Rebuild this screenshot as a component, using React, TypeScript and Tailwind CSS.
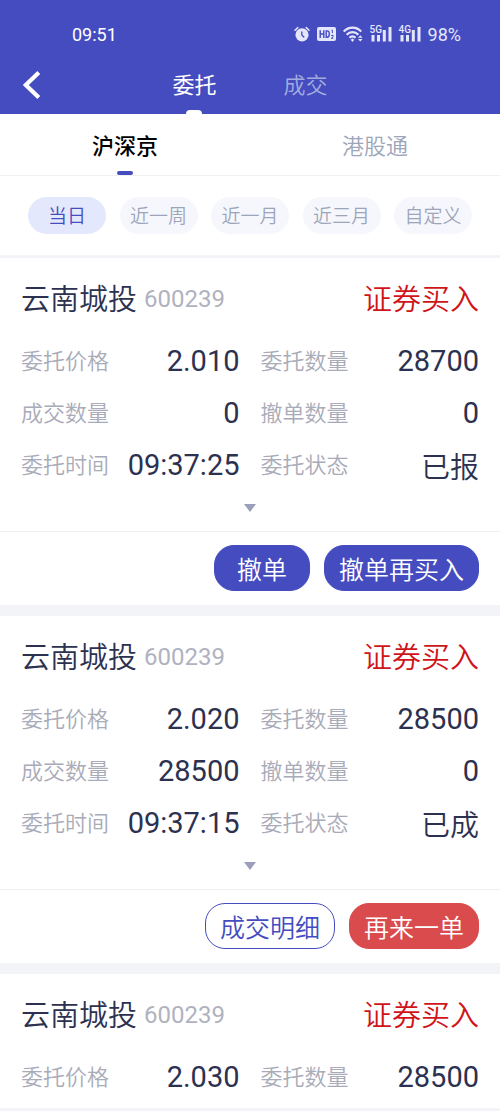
import { useState } from 'react'
import clsx from 'clsx'

type Action = { label: string; tone: 'primary' | 'outline' | 'danger' }

type Order = {
  id: number
  name: string
  code: string
  side: string
  fields: { label: string; value: string }[]
  actions: Action[]
}

const orders: Order[] = [
  {
    id: 1,
    name: '云南城投',
    code: '600239',
    side: '证券买入',
    fields: [
      { label: '委托价格', value: '2.010' },
      { label: '委托数量', value: '28700' },
      { label: '成交数量', value: '0' },
      { label: '撤单数量', value: '0' },
      { label: '委托时间', value: '09:37:25' },
      { label: '委托状态', value: '已报' },
    ],
    actions: [
      { label: '撤单', tone: 'primary' },
      { label: '撤单再买入', tone: 'primary' },
    ],
  },
  {
    id: 2,
    name: '云南城投',
    code: '600239',
    side: '证券买入',
    fields: [
      { label: '委托价格', value: '2.020' },
      { label: '委托数量', value: '28500' },
      { label: '成交数量', value: '28500' },
      { label: '撤单数量', value: '0' },
      { label: '委托时间', value: '09:37:15' },
      { label: '委托状态', value: '已成' },
    ],
    actions: [
      { label: '成交明细', tone: 'outline' },
      { label: '再来一单', tone: 'danger' },
    ],
  },
  {
    id: 3,
    name: '云南城投',
    code: '600239',
    side: '证券买入',
    fields: [
      { label: '委托价格', value: '2.030' },
      { label: '委托数量', value: '28500' },
    ],
    actions: [],
  },
]

const ranges = ['当日', '近一周', '近一月', '近三月', '自定义']

function AlarmIcon() {
  return (
    <svg viewBox="0 0 16 16" className="h-4 w-4" fill="none" stroke="currentColor" strokeLinecap="round">
      <circle cx="8" cy="8.8" r="6.6" fill="currentColor" stroke="none" />
      <path d="M1 4.2 3.8 1.6M15 4.2 12.2 1.6" strokeWidth="1.5" />
      <path d="M7.8 5.8V9l2 2" stroke="#444cbf" strokeWidth="1.3" />
    </svg>
  )
}

function HdIcon() {
  return (
    <svg viewBox="0 0 19 14" className="h-[14px] w-[19px]">
      <rect width="19" height="14" rx="2" fill="currentColor" />
      <g fill="none" stroke="#444cbf" strokeWidth="1.4">
        <path d="M3.2 3.2v7.8M6.8 3.2v7.8M3.2 7h3.6" />
        <path d="M9.200 3.900v6.400h.8c1.600 0 2.300-1 2.300-3.200s-.7-3.200-2.300-3.200z" />
        <path d="M14.400 3.200h1v3M14.100 8.400h2v1.300l-1.800 1.600h2" strokeWidth="1" />
      </g>
    </svg>
  )
}

function WifiIcon() {
  return (
    <svg viewBox="0 0 20 16" className="h-4 w-5" fill="none" stroke="currentColor" strokeWidth="2.2">
      <path d="M.8 5.6C5.4.3 13.6.3 18.2 5.6" />
      <path d="M3.7 8.8c3.2-3.6 8.4-3.6 11.6 0" />
      <path d="M6.5 11.8c1.7-1.9 4.3-1.9 6 0" />
      <path d="m7.700 13.800 1.800-1.400 1.800 1.400-1.800 2.200z" fill="currentColor" stroke="none" />
      <path d="m15 11.800 2.300-2.600 2.300 2.600zM15 13l2.300 2.600 2.300-2.600z" fill="currentColor" stroke="none" />
    </svg>
  )
}

function Signal({ label }: { label: string }) {
  return (
    <span className="relative block">
      <svg viewBox="0 0 22 16" className="h-4 w-[22px]" fill="currentColor">
        <path d="M1.500 9h3v6.500h-3zM7 9h3v6.500H7zM12.800 4h3v11.500h-3zM18.500 1h3v14.500h-3z" />
      </svg>
      <span className="absolute -top-px left-0 bg-[#444cbf] text-[10px] leading-[10px] font-medium">{label}</span>
    </span>
  )
}

function StatusBar() {
  return (
    <div className="flex h-[58px] items-center justify-between pt-[10px] pr-[39px] pl-[72px] font-normal">
      <span className="text-[18px]">09:51</span>
      <div className="flex items-center gap-[7px] text-[#e4e7fb]">
        <AlarmIcon />
        <HdIcon />
        <WifiIcon />
        <Signal label="5G" />
        <Signal label="4G" />
        <span className="text-[18px]">98%</span>
      </div>
    </div>
  )
}

function ActionButton({ label, tone }: Action) {
  return (
    <button
      type="button"
      className={clsx(
        'h-[46px] rounded-[20px] border text-[25px] leading-[44px]',
        label.length > 2 ? 'px-[14px]' : 'px-[22px]',
        tone === 'primary' && 'border-[#444cbf] bg-[#444cbf] text-white',
        tone === 'outline' && 'border-[#444cbf] bg-white text-[#444cbf]',
        tone === 'danger' && 'border-[#d94b4d] bg-[#d94b4d] text-white',
      )}
    >
      {label}
    </button>
  )
}

function OrderCard({ order }: { order: Order }) {
  return (
    <article className="bg-white">
      <div className="px-[21px] pt-[18px]">
        <div className="flex h-11 items-center justify-between">
          <h2 className="flex items-center gap-[7px] text-[29px] text-[#2d3150]">
            {order.name}
            <span className="pt-[2px] font-[Roboto,sans-serif] text-[24px] font-normal text-[#b0b2bf]">{order.code}</span>
          </h2>
          <span className="text-[29px] text-[#cf1519]">{order.side}</span>
        </div>
        <dl className="mt-4 grid grid-cols-2 gap-x-[21px]">
          {order.fields.map((field) => (
            <div key={field.label} className="flex h-[52px] items-center justify-between">
              <dt className="pb-[6px] text-[22px] text-[#a9abb8]">{field.label}</dt>
              <dd
                className={clsx(
                  'text-[29px] text-[#2d3150]',
                  /^[\d.:]+$/.test(field.value) && 'font-[Roboto,sans-serif] font-normal',
                )}
              >
                {field.value}
              </dd>
            </div>
          ))}
        </dl>
      </div>
      {order.actions.length > 0 ? (
        <>
          <button type="button" aria-label="展开" className="flex h-[39px] w-full justify-center pt-3">
            <svg viewBox="0 0 12 8" className="h-2 w-3" fill="#9c9fbb">
              <path d="M0 0h12L6 8z" />
            </svg>
          </button>
          <div className="flex justify-end gap-[14px] border-t border-[#f0f0f3] px-[21px] pt-[13px] pb-[14px]">
            {order.actions.map((action) => (
              <ActionButton key={action.label} {...action} />
            ))}
          </div>
        </>
      ) : (
        <div className="h-1" />
      )}
    </article>
  )
}

export default function App() {
  const [page, setPage] = useState('委托')
  const [market, setMarket] = useState('沪深京')
  const [range, setRange] = useState('当日')

  return (
    <div className="min-h-screen bg-[#f3f4f7] font-['Noto_Sans_CJK_SC',sans-serif] font-[350]">
      <header className="bg-[#444cbf] font-[Roboto,'Noto_Sans_CJK_SC',sans-serif] text-white">
        <StatusBar />
        <nav className="relative flex h-14 justify-center gap-[67px]">
          <button type="button" aria-label="返回" className="absolute top-3 left-[22px]">
            <svg viewBox="0 0 20 30" className="h-[30px] w-5" fill="none" stroke="currentColor" strokeWidth="4.2">
              <path d="M16.800 2.500 3.800 15l13 12.500" />
            </svg>
          </button>
          {['委托', '成交'].map((item) => (
            <button
              key={item}
              type="button"
              onClick={() => setPage(item)}
              className={clsx(
                'flex flex-col items-center justify-between pt-3 text-[22px] leading-8',
                page === item ? 'font-normal text-white' : 'text-[#a3acdf]',
              )}
            >
              {item}
              {page === item && <span className="h-1 w-4 rounded-t-sm bg-white" />}
            </button>
          ))}
        </nav>
      </header>

      <nav className="flex h-[62px] border-b border-[#f0f0f3] bg-white">
        {['沪深京', '港股通'].map((item) => (
          <button
            key={item}
            type="button"
            onClick={() => setMarket(item)}
            className={clsx(
              'flex flex-1 flex-col items-center justify-between pt-[14px] text-[22px] leading-8',
              market === item ? 'font-medium text-black' : 'text-[#9da5bb]',
            )}
          >
            {item}
            {market === item && <span className="h-1 w-4 rounded-full bg-[#444cbf]" />}
          </button>
        ))}
      </nav>

      <div className="mb-[3px] flex justify-between bg-white px-7 py-[21px]">
        {ranges.map((item) => (
          <button
            key={item}
            type="button"
            onClick={() => setRange(item)}
            className={clsx(
              'h-[37px] w-[78px] rounded-full text-[19px]',
              range === item ? 'bg-[#e4e8fc] text-[#444cbf]' : 'bg-[#f6f7fc] text-[#9da5bb]',
            )}
          >
            {item}
          </button>
        ))}
      </div>

      <main className="flex flex-col gap-[11px]">
        {orders.map((order) => (
          <OrderCard key={order.id} order={order} />
        ))}
      </main>
    </div>
  )
}
